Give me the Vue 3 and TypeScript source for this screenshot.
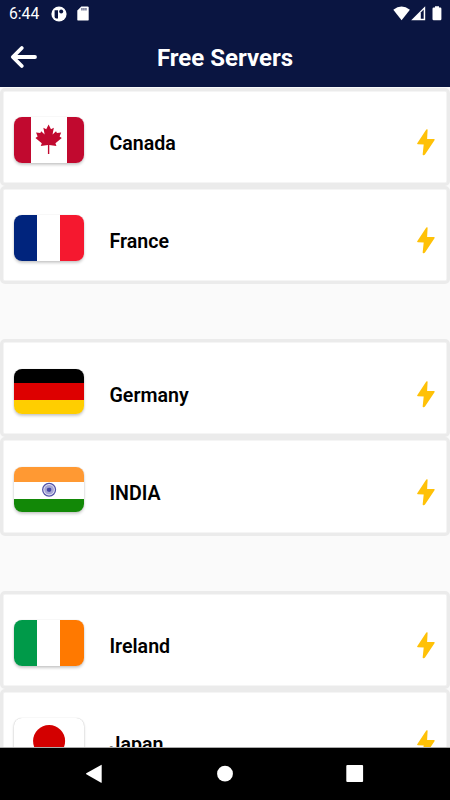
<script setup lang="ts">
interface Server { name: string; flag: string }

const groups: Server[][] = [
  [{ name: 'Canada', flag: 'ca' }, { name: 'France', flag: 'fr' }],
  [{ name: 'Germany', flag: 'de' }, { name: 'INDIA', flag: 'in' }],
  [{ name: 'Ireland', flag: 'ie' }, { name: 'Japan', flag: 'jp' }],
]
</script>

<template>
  <div class="screen">
    <header>
      <div class="status">
        <span class="time">6:44</span>
        <svg class="app-icon" width="16" height="16" viewBox="0 0 16 16">
          <circle cx="8" cy="8" r="7.6" fill="#fff" />
          <path d="M3.6 4.2H7v8.3H5.3Q3.6 12.5 3.6 10.7z" fill="#0a1541" />
          <circle cx="10.2" cy="5.4" r="2" fill="#0a1541" />
        </svg>
        <svg class="sd" width="12" height="15" viewBox="0 0 12 15">
          <path d="M4.3.4h6.2q1.2 0 1.2 1.2v11.8q0 1.2-1.2 1.2h-9Q.3 14.6.3 13.4V4.5z" fill="#fff" />
          <path d="M4.3 2h1.3v2.4H4.3zM6.3 2h1.3v2.4H6.3zM8.3 2h1.3v2.4H8.3z" fill="#596080" />
        </svg>
        <span class="spacer"></span>
        <svg class="wifi" width="18" height="15" viewBox="0 0 18 15">
          <path d="M.3 3.7Q8.5-2.7 16.9 3.7L8.6 14.2z" fill="#fff" />
        </svg>
        <svg class="signal" width="15" height="15" viewBox="0 0 15 15">
          <path d="M14.2.2V14.2H.2z" fill="#fff" />
          <path d="M9.8 6.4 12.7 3.5V12.7H9.8z" fill="#0a1541" />
        </svg>
        <svg class="battery" width="10" height="15" viewBox="0 0 10 15">
          <path d="M3 .3h4v1.3h1.2q1.2 0 1.2 1.2v10.2q0 1.2-1.2 1.2H1.7Q.5 14.2.5 13V2.8q0-1.2 1.2-1.2H3z" fill="#fff" />
        </svg>
      </div>
      <div class="toolbar">
        <svg class="back" width="28" height="24" viewBox="0 0 28 24" fill="none" stroke="#fff" stroke-width="3.8" stroke-linecap="round" stroke-linejoin="round">
          <path d="M12.8 3 3.8 12l9 9M4.5 12h21.5" />
        </svg>
        <h1>Free Servers</h1>
      </div>
    </header>
    <main>
      <section v-for="(group, i) in groups" :key="i" class="group">
        <article v-for="server in group" :key="server.name" class="card">
          <div class="flag" :class="server.flag">
            <svg v-if="server.flag === 'ca'" viewBox="0 0 70 46">
              <path d="M34.6 7.5 32.2 12.3 29.3 10.8 30.6 17.8 27.1 14.3 26.2 16.3 21.9 15.7 23.5 19.8 21.3 21.2 27.7 26.5 26.7 29.4 33.9 28.3V37.5H35.3V28.3L42.5 29.4 41.5 26.5 47.9 21.2 45.7 19.8 47.3 15.7 43 16.3 42.1 14.3 38.6 17.8 39.9 10.8 37 12.3z" fill="#c1092f" />
            </svg>
            <svg v-if="server.flag === 'in'" viewBox="0 0 70 46">
              <circle cx="35.1" cy="23" r="6.5" fill="#e9e9f6" stroke="#5252a8" stroke-width="1.3" />
              <circle cx="35.1" cy="23" r="3.6" fill="none" stroke="#a5a5d4" stroke-width="2.6" />
              <circle cx="35.1" cy="23" r="2.4" fill="#4545a3" />
            </svg>
            <svg v-if="server.flag === 'jp'" viewBox="0 0 70 46">
              <circle cx="35.1" cy="23.3" r="16.2" fill="#d30000" />
            </svg>
          </div>
          <span class="name">{{ server.name }}</span>
          <svg class="bolt" width="18" height="27" viewBox="0 0 18 27">
            <path d="M9.3.6Q10.7-.4 10.6 1.1L10.1 10.1H17Q18.2 10.1 17.5 11.2L8 25.6Q7 26.7 5.9 26 5.6 25.7 5.7 25L6.7 15.4.9 15.3Q-.3 15.2.4 14.1z" fill="#ffc107" />
          </svg>
        </article>
      </section>
    </main>
    <nav>
      <svg width="450" height="52" viewBox="0 0 450 52" fill="#fff">
        <path d="M101.7 17.1V34.5Q101.7 35 101.1 34.7L86.3 26.3Q85.6 25.8 86.3 25.3L101.1 16.9Q101.7 16.6 101.7 17.1z" />
        <circle cx="225" cy="25.7" r="7.9" />
        <rect x="346.3" y="17.1" width="16.8" height="16.8" rx="1" />
      </svg>
    </nav>
  </div>
</template>

<style>
body { margin: 0; }
</style>

<style scoped>
.screen {
  width: 450px;
  height: 800px;
  display: flex;
  flex-direction: column;
  overflow: hidden;
  background: #fafafa;
  font-family: Roboto, "Liberation Sans", sans-serif;
}
header { flex: none; height: 87px; background: #0a1541; color: #fff; }
svg { display: block; flex: none; }
.status { display: flex; height: 27px; padding: 0 8px 0 9px; align-items: center; box-sizing: border-box; }
.time { width: 41.5px; font-size: 15.7px; line-height: 28px; }
.app-icon { margin-right: 10px; }
.spacer { flex: 1; }
.signal { margin-right: 6.5px; }
.toolbar { display: grid; grid-template-columns: 40px 1fr 40px; align-items: center; height: 60px; }
.back { margin-left: 9px; }
h1 { margin: 0; padding-top: 2px; text-align: center; font-size: 24px; line-height: 58px; font-weight: 700; }
main { flex: 1; min-height: 0; overflow: hidden; padding-top: .5px; }
.group { margin-bottom: 55px; }
.card {
  display: flex;
  box-sizing: border-box;
  height: 98.25px;
  padding: 26.5px 12px 0 11.3px;
  border: 3px solid #ebebeb;
  border-radius: 5px;
  background: #fff;
  box-shadow: inset 0 0 0 .5px #ebebeb;
}
.flag {
  flex: none;
  width: 70px;
  height: 45.5px;
  border-radius: 8px;
  overflow: hidden;
  box-shadow: 0 2px 3px #0003, 0 0 1px #0004;
}
.flag svg { width: 70px; height: 45.5px; }
.ca { background: linear-gradient(90deg, #c1092f 17px, #fff 17px 53px, #c1092f 53px); }
.fr { background: linear-gradient(90deg, #00247d 23.5px, #fff 23.5px 46.5px, #f5182f 46.5px); }
.ie { background: linear-gradient(90deg, #009a49 23.5px, #fff 23.5px 46.5px, #ff7900 46.5px); }
.de { background: linear-gradient(#000 14px, #d00 14px 31.5px, #ffce00 31.5px); }
.in { background: linear-gradient(#ff9933 14.5px, #fff 14.5px 31.5px, #128807 31.5px); }
.jp { background: #fff; }
.name { flex: 1; margin-left: 25.2px; padding-top: 15px; font-size: 19.6px; line-height: 24px; font-weight: 600; color: #000; }
.bolt { margin-top: 12px; }
nav { flex: none; height: 52px; background: #000; border-top: 1px solid #aaa; }
</style>
